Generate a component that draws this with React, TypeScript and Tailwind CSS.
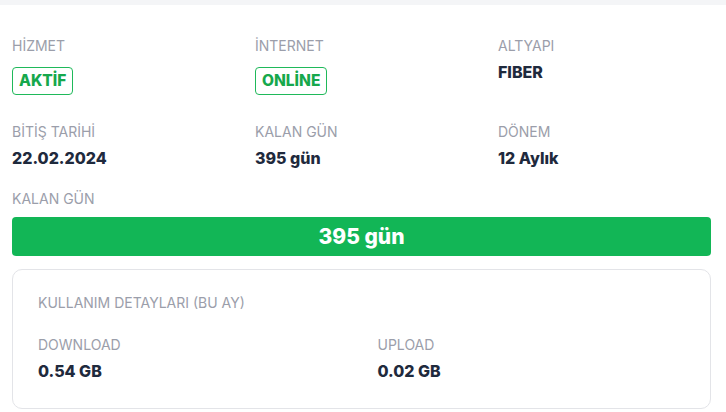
import React from 'react';

type Item = { label: string; value: string; badge?: boolean };

const rows: Item[][] = [
  [
    { label: 'HİZMET', value: 'AKTİF', badge: true },
    { label: 'İNTERNET', value: 'ONLİNE', badge: true },
    { label: 'ALTYAPI', value: 'FIBER' },
  ],
  [
    { label: 'BİTİŞ TARİHİ', value: '22.02.2024' },
    { label: 'KALAN GÜN', value: '395 gün' },
    { label: 'DÖNEM', value: '12 Aylık' },
  ],
];

const Field: React.FC<{ item: Item }> = ({ item }) => (
  <div className="flex flex-col">
    <span className="text-[14px] leading-5 text-[#9b9eaa]">{item.label}</span>
    {item.badge ? (
      <span className="mt-[11px] self-start rounded-[4px] border border-[#1fb95a] px-[6px] h-[28px] flex items-center text-[15.5px] font-extrabold text-[#16a84c]">
        {item.value}
      </span>
    ) : (
      <span className="mt-1 text-[16px] leading-6 font-extrabold text-[#1f2a3d]">{item.value}</span>
    )}
  </div>
);

const App: React.FC = () => {
  return (
    <div className="w-full min-h-screen bg-white" style={{ fontFamily: 'Inter, "Noto Sans", sans-serif' }}>
      <div className="h-[5px] bg-[#f4f5f7]" />
      <div className="pl-3 pr-[15px] pt-[31px]">
        <div className="grid grid-cols-3 gap-x-[30px]">
          {rows[0].map((it) => (
            <Field key={it.label} item={it} />
          ))}
        </div>
        <div className="grid grid-cols-3 gap-x-[30px] mt-[27px]">
          {rows[1].map((it) => (
            <Field key={it.label} item={it} />
          ))}
        </div>
        <div className="mt-[19px] text-[14px] leading-5 text-[#9b9eaa]">KALAN GÜN</div>
        <div className="mt-2 h-[39px] rounded-[4px] bg-[#12b656] flex items-center justify-center text-white text-[21px] font-extrabold">
          395 gün
        </div>
        <div className="mt-[13px] rounded-[10px] border border-[#e3e4e8] px-[25px] pt-[23px] pb-[25px]">
          <div className="text-[14px] leading-5 text-[#9b9eaa]">KULLANIM DETAYLARI (BU AY)</div>
          <div className="grid grid-cols-2 gap-x-8 mt-[22px]">
            <div className="flex flex-col">
              <span className="text-[14px] leading-5 text-[#9b9eaa]">DOWNLOAD</span>
              <span className="mt-1 text-[16px] leading-6 font-extrabold text-[#1f2a3d]">0.54 GB</span>
            </div>
            <div className="flex flex-col">
              <span className="text-[14px] leading-5 text-[#9b9eaa]">UPLOAD</span>
              <span className="mt-1 text-[16px] leading-6 font-extrabold text-[#1f2a3d]">0.02 GB</span>
            </div>
          </div>
        </div>
      </div>
    </div>
  );
};

export default App;
